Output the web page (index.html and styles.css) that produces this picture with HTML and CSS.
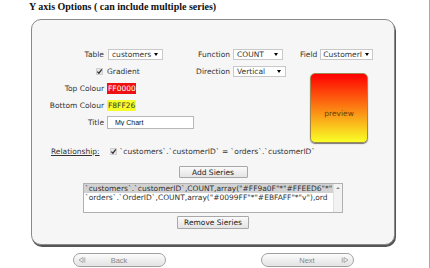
FILE: index.html
```html
<!DOCTYPE html>
<html lang="en">
	<head>
		<meta charset="utf-8">
		<title>Y axis Options</title>
		<link rel="stylesheet" href="styles.css">
	</head>
	<body>
		<div class="page">
			<h3 class="heading">Y axis Options ( can include multiple series)</h3>
			<div class="panel">
				<div class="options">
					<div class="col-left">
						<label>Table</label>
						<span class="select sel-table"><span class="val">customers</span><i class="arrow"></i></span>
						<span class="check-cell"><span class="check"><svg width="7" height="7" viewBox="0 0 7 7"><path d="M1.3 3.6 L2.9 5.2 L5.8 1.4" fill="none" stroke="#333" stroke-width="1.3"/></svg></span></span>
						<span>Gradient</span>
						<label>Top Colour</label>
						<input class="colour red" type="text" value="FF0000">
						<label>Bottom Colour</label>
						<input class="colour yellow" type="text" value="F8FF26">
						<label>Title</label>
						<input class="title-input" type="text" value="My Chart">
					</div>
					<div class="col-mid">
						<label>Function</label>
						<span class="select sel-func"><span class="val">COUNT</span><i class="arrow"></i></span>
						<label>Direction</label>
						<span class="select sel-dir"><span class="val">Vertical</span><i class="arrow"></i></span>
					</div>
					<div class="col-right">
						<div class="field-row">
							<label>Field</label>
							<span class="select sel-field"><span class="val">CustomerI</span><i class="arrow"></i></span>
						</div>
						<div class="preview">preview</div>
					</div>
				</div>
				<div class="relation">
					<span class="rel-label">Relationship:</span>
					<span class="check"><svg width="7" height="7" viewBox="0 0 7 7"><path d="M1.3 3.6 L2.9 5.2 L5.8 1.4" fill="none" stroke="#333" stroke-width="1.3"/></svg></span>
					<span class="rel-text">`customers`.`customerID` = `orders`.`customerID`</span>
				</div>
				<button class="btn btn-add">Add Sieries</button>
				<div class="listbox">
					<div class="lines">
						<div class="line selected">`customers`.`customerID`,COUNT,array("#FF9a0F"*"#FFEED6"*"</div>
						<div class="line">`orders`.`OrderID`,COUNT,array("#0099FF"*"#EBFAFF"*"v"),ord</div>
					</div>
					<div class="scroll"><i class="up"></i></div>
				</div>
				<button class="btn btn-remove">Remove Sieries</button>
			</div>
			<div class="nav">
				<div class="pill">
					<svg class="pill-icon left" width="8" height="6" viewBox="0 0 8 6"><path d="M5 0.5 L1 3 L5 5.5 Z" fill="none" stroke="#999" stroke-width="0.8"/><path d="M6.8 0.5 V5.5" stroke="#999" stroke-width="0.8"/></svg>
					<span>Back</span>
				</div>
				<div class="pill">
					<span>Next</span>
					<svg class="pill-icon right" width="8" height="6" viewBox="0 0 8 6"><path d="M3 0.5 L7 3 L3 5.5 Z" fill="none" stroke="#999" stroke-width="0.8"/><path d="M1.2 0.5 V5.5" stroke="#999" stroke-width="0.8"/></svg>
				</div>
			</div>
		</div>
	</body>
</html>
```

FILE: styles.css
```css
* {
	box-sizing: border-box;
}
body {
	margin: 0;
	background-color: #fff;
	font-family: "DejaVu Sans", Verdana, sans-serif;
	font-size: 7.5px;
	color: #333;
}
.page {
	width: 430px;
	height: 268px;
	border-right: 1px solid #aaa;
	overflow: hidden;
}
.heading {
	margin: 0 0 6px 29px;
	padding-top: 1px;
	font-family: "Liberation Serif", "Times New Roman", serif;
	font-size: 10px;
	line-height: 12px;
	font-weight: bold;
	color: #111;
}
.panel {
	margin-left: 31px;
	width: 364px;
	height: 226px;
	border: 1px solid #8a8a8a;
	border-radius: 10px;
	box-shadow: 1px 2px 0 #555;
	background-color: #f6f6f6;
	padding-top: 26px;
	display: flex;
	flex-direction: column;
	align-items: center;
}
.options {
	align-self: stretch;
	display: flex;
	align-items: flex-start;
}
.col-left {
	display: grid;
	grid-template-columns: 72px 87px;
	grid-auto-rows: 17px;
	column-gap: 3px;
	align-items: center;
}
.col-mid {
	display: grid;
	grid-template-columns: 36px 53px;
	grid-auto-rows: 17px;
	column-gap: 3px;
	align-items: center;
}
.col-left label,
.col-mid label {
	text-align: right;
	white-space: nowrap;
}
.col-right {
	display: flex;
	flex-direction: column;
}
.field-row {
	height: 17px;
	display: flex;
	align-items: center;
	gap: 3px;
	margin-left: 14px;
}
.select {
	display: flex;
	align-items: center;
	height: 11px;
	background-color: #fff;
	border: 1px solid #c8c8c8;
	padding: 0 4px 0 3px;
}
.select .val {
	flex: 1;
	white-space: nowrap;
}
.arrow {
	width: 0;
	height: 0;
	border-left: 2px solid transparent;
	border-right: 2px solid transparent;
	border-top: 3px solid #000;
	margin-left: 3px;
}
.sel-table {
	width: 55px;
	margin-left: 1px;
}
.sel-func {
	width: 50px;
}
.sel-dir {
	width: 53px;
}
.sel-field {
	width: 53px;
	padding-left: 2px;
}
.check-cell {
	display: flex;
	justify-content: flex-end;
	padding-right: 1px;
}
.check {
	display: inline-flex;
	width: 7px;
	height: 7px;
	background-color: #e6e6e6;
	border: 1px solid #d0d0d0;
	align-items: center;
	justify-content: center;
}
.check svg {
	flex: none;
}
input {
	font-family: "DejaVu Sans", Verdana, sans-serif;
	font-size: 7.5px;
	margin: 0;
	outline: none;
}
.colour {
	width: 29px;
	height: 11px;
	border: none;
	padding: 0 0 0 1px;
}
.red {
	background-color: #ee1111;
	color: #fff;
}
.yellow {
	background-color: #f8ff26;
	color: #333;
}
.title-input {
	width: 87px;
	height: 13px;
	border: 1px solid #b8b8b8;
	background-color: #fff;
	padding: 0 0 0 7px;
	font-family: "Liberation Sans", Arial, sans-serif;
	font-size: 7px;
	color: #111;
}
.preview {
	margin: 10px 0 0 24px;
	width: 58px;
	height: 70px;
	padding-top: 10px;
	border: 1px solid #a08850;
	border-radius: 5px;
	box-shadow: 0 1px 1px #777;
	background: linear-gradient(#ff0000, #f8ff26);
	display: flex;
	align-items: center;
	justify-content: center;
	color: #6a4000;
}
.relation {
	align-self: stretch;
	display: flex;
	align-items: center;
	height: 13px;
	margin-top: 2px;
	padding-left: 19px;
}
.rel-label {
	text-decoration: underline;
	margin-right: 10px;
}
.rel-text {
	margin-left: 3px;
	white-space: nowrap;
}
.btn {
	font-family: "DejaVu Sans", Verdana, sans-serif;
	font-size: 7.5px;
	color: #222;
	background: linear-gradient(#fafafa, #e4e4e4);
	border: 1px solid #a8a8a8;
	border-radius: 1px;
	padding: 0;
}
.btn-add {
	width: 69px;
	height: 12px;
	margin-top: 8px;
}
.btn-remove {
	width: 72px;
	height: 13px;
	margin-top: 3px;
}
.listbox {
	margin-top: 5px;
	width: 260px;
	height: 30px;
	border: 1px solid #b0b0b0;
	background-color: #fff;
	display: flex;
}
.lines {
	flex: 1;
}
.line {
	height: 9px;
	line-height: 9px;
	white-space: nowrap;
	padding-left: 1px;
}
.line.selected {
	background-color: #d2d2d2;
}
.scroll {
	width: 9px;
	background-color: #f2f2f2;
	border-left: 1px solid #e0e0e0;
	display: flex;
	justify-content: center;
	padding-top: 3px;
}
.up {
	width: 0;
	height: 0;
	border-left: 2px solid transparent;
	border-right: 2px solid transparent;
	border-bottom: 2px solid #888;
}
.nav {
	margin: 8px 0 0 31px;
	width: 364px;
	display: flex;
	justify-content: center;
	gap: 95px;
}
.pill {
	position: relative;
	width: 93px;
	height: 14px;
	border: 1px solid #a0a0a0;
	border-radius: 7px;
	background: linear-gradient(#fcfcfc, #e2e2e2);
	box-shadow: inset 0 0 1px #fff;
	display: flex;
	align-items: center;
	justify-content: center;
	font-family: "Liberation Sans", Arial, sans-serif;
	font-size: 7.5px;
	color: #888;
}
.pill-icon {
	position: absolute;
	top: 3px;
}
.pill-icon.left {
	left: 4px;
}
.pill-icon.right {
	right: 4px;
}
```
